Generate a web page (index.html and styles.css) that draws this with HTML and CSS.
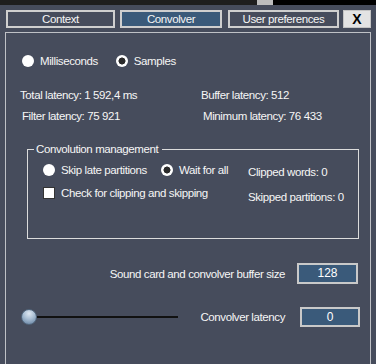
FILE: index.html
```html
<!DOCTYPE html>
<html>
<head>
<meta charset="utf-8">
<link rel="stylesheet" href="styles.css">
</head>
<body>
<div class="topbar"><div class="thumb"></div><div class="blackfill"></div></div>
<div class="tabs">
  <div class="tab tab-context">Context</div>
  <div class="tab tab-convolver active">Convolver</div>
  <div class="tab tab-prefs">User preferences</div>
  <div class="close">X</div>
</div>
<div class="panel">
  <div class="unit-row">
    <label class="radio"><span class="dot"></span>Milliseconds</label>
    <label class="radio"><span class="dot checked"></span>Samples</label>
  </div>
  <div class="latency">
    <div class="lat">Total latency: 1&nbsp;592,4 ms</div>
    <div class="lat">Buffer latency: 512</div>
    <div class="lat shift">Filter latency: 75&nbsp;921</div>
    <div class="lat shift">Minimum latency: 76&nbsp;433</div>
  </div>
  <fieldset class="group">
    <legend>Convolution management</legend>
    <div class="group-body">
      <div class="group-left">
        <div class="mode-row">
          <label class="radio"><span class="dot"></span>Skip late partitions</label>
          <label class="radio"><span class="dot checked"></span>Wait for all</label>
        </div>
        <label class="check"><span class="box"></span>Check for clipping and skipping</label>
      </div>
      <div class="group-right">
        <div class="stat">Clipped words: 0</div>
        <div class="stat">Skipped partitions: 0</div>
      </div>
    </div>
  </fieldset>
  <div class="buf-row">
    <span class="caption">Sound card and convolver buffer size</span>
    <div class="field field-buf">128</div>
  </div>
  <div class="lat-row">
    <div class="slider"><span class="knob"></span><span class="track"></span></div>
    <span class="caption">Convolver latency</span>
    <div class="field field-lat">0</div>
  </div>
</div>
</body>
</html>
```
FILE: styles.css
```css
html, body {
  margin: 0;
  padding: 0;
}
body {
  width: 376px;
  height: 364px;
  overflow: hidden;
  background: #464c5c;
  color: #f6f6f6;
  font-family: "Liberation Sans", Arial, sans-serif;
  font-size: 11.5px;
  letter-spacing: -0.4px;
  line-height: 14px;
}
.topbar {
  display: flex;
  height: 5px;
  background: #1e1e1e;
}
.thumb {
  margin-left: 257px;
  width: 16px;
  background: #bdbdbd;
}
.blackfill {
  flex: 1;
  background: #000;
}
.tabs {
  display: flex;
  margin-top: 5px;
  padding-left: 6px;
  height: 18px;
}
.tab {
  box-sizing: border-box;
  height: 18px;
  border: 2px solid #cfcfcf;
  background: #464c5c;
  color: #f6f6f6;
  text-align: center;
  line-height: 14px;
}
.tab-context { width: 109px; }
.tab-convolver { width: 102px; margin-left: 5px; }
.tab-prefs { width: 111px; margin-left: 6px; }
.tab.active { background: #3a5a7a; }
.close {
  box-sizing: border-box;
  width: 28px;
  height: 18px;
  margin-left: 4px;
  background: #e3e3e3;
  border: 1px solid #c4c4c4;
  color: #000;
  font-weight: bold;
  font-size: 14px;
  letter-spacing: 0;
  text-align: center;
  line-height: 16px;
}
.panel {
  box-sizing: border-box;
  margin: 4px 0 0 5px;
  width: 366px;
  height: 340px;
  border: 1px solid #bfc1c6;
  border-bottom: none;
}
.unit-row {
  display: flex;
  gap: 18px;
  margin: 21px 0 0 16px;
}
.radio {
  display: inline-flex;
  align-items: center;
  gap: 6px;
  height: 14px;
}
.dot {
  box-sizing: border-box;
  width: 12px;
  height: 12px;
  border-radius: 50%;
  background: #fff;
}
.dot.checked {
  background: radial-gradient(circle, #2a2a2a 0 3.2px, #fff 3.8px);
}
.latency {
  display: grid;
  grid-template-columns: 181px auto;
  row-gap: 7px;
  margin: 20px 0 0 14px;
}
.lat.shift { margin-left: 2px; }
.group {
  box-sizing: border-box;
  margin: 19px 0 0 21px;
  width: 332px;
  height: 97px;
  padding: 0;
  border: 1px solid #dcdcdc;
  min-width: 0;
}
.group legend {
  margin-left: 6px;
  padding: 0 4px 0 2px;
  line-height: 14px;
}
.group-body {
  display: flex;
}
.group-left {
  width: 205px;
  padding-left: 15px;
}
.mode-row {
  display: flex;
  gap: 14px;
  margin-top: 7px;
}
.check {
  display: flex;
  align-items: center;
  gap: 6px;
  margin-top: 9px;
  height: 14px;
}
.box {
  box-sizing: border-box;
  width: 12px;
  height: 12px;
  background: #fff;
  border: 1px solid #333;
}
.group-right {
  display: flex;
  flex-direction: column;
  gap: 11px;
  margin-top: 9px;
}
.buf-row, .lat-row {
  display: flex;
  align-items: center;
}
.buf-row {
  margin-top: 24px;
  justify-content: flex-end;
  padding-right: 12px;
}
.field {
  box-sizing: border-box;
  background: #3a5a7a;
  border: 2px solid #c9c9c9;
  color: #fff;
  text-align: center;
  font-size: 12px;
  letter-spacing: 0;
}
.field-buf {
  width: 61px;
  height: 21px;
  line-height: 17px;
  margin-left: 12px;
}
.lat-row {
  margin-top: 23px;
  padding-left: 15px;
  padding-right: 10px;
}
.slider {
  display: flex;
  align-items: center;
  width: 157px;
}
.knob {
  box-sizing: border-box;
  width: 16px;
  height: 16px;
  border-radius: 50%;
  border: 1px solid #52667c;
  background: radial-gradient(circle at 50% 25%, #dfe8f2 0, #a8bdd3 45%, #5e7c9c 100%);
}
.track {
  flex: 1;
  height: 2px;
  background: #111;
}
.lat-row .caption {
  margin-left: auto;
}
.field-lat {
  width: 60px;
  height: 20px;
  line-height: 16px;
  margin-left: 15px;
}
```
